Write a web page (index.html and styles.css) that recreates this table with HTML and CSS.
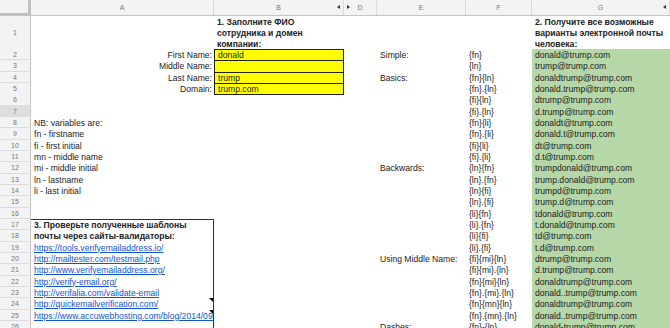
FILE: index.html
```html
<!DOCTYPE html>
<html lang="ru">
  <head>
    <meta charset="UTF-8" />
    <title>Шаблоны email</title>
    <link rel="stylesheet" href="styles.css">
  </head>
  <body>
    <div class="sheet">
      <!-- заголовки колонок -->
      <div class="row head">
        <div class="corner"></div>
        <div class="col">A</div>
        <div class="col">B<span class="arrow arrow-left at-right"></span></div>
        <div class="col"><span class="arrow arrow-right at-left"></span>D</div>
        <div class="col">E</div>
        <div class="col">F</div>
        <div class="col">G<span class="arrow arrow-left at-right"></span></div>
      </div>

      <div class="row tall">
        <div class="num">1</div>
        <div class="cell"></div>
        <div class="cell title">1. Заполните ФИО<br>сотрудника и домен<br>компании:</div>
        <div class="cell"></div>
        <div class="cell"></div>
        <div class="cell"></div>
        <div class="cell title">2. Получите все возможные<br>варианты электронной почты<br>человека:</div>
      </div>

      <div class="row">
        <div class="num">2</div>
        <div class="cell right">First Name:</div>
        <div class="cell input">donald</div>
        <div class="cell"></div>
        <div class="cell">Simple:</div>
        <div class="cell">{fn}</div>
        <div class="cell green">donald@trump.com</div>
      </div>
      <div class="row">
        <div class="num">3</div>
        <div class="cell right">Middle Name:</div>
        <div class="cell input"></div>
        <div class="cell"></div>
        <div class="cell"></div>
        <div class="cell">{ln}</div>
        <div class="cell green">trump@trump.com</div>
      </div>
      <div class="row">
        <div class="num">4</div>
        <div class="cell right">Last Name:</div>
        <div class="cell input">trump</div>
        <div class="cell"></div>
        <div class="cell">Basics:</div>
        <div class="cell">{fn}{ln}</div>
        <div class="cell green">donaldtrump@trump.com</div>
      </div>
      <div class="row">
        <div class="num">5</div>
        <div class="cell right">Domain:</div>
        <div class="cell input last">trump.com</div>
        <div class="cell"></div>
        <div class="cell"></div>
        <div class="cell">{fn}.{ln}</div>
        <div class="cell green">donald.trump@trump.com</div>
      </div>
      <div class="row">
        <div class="num">6</div>
        <div class="cell"></div>
        <div class="cell"></div>
        <div class="cell"></div>
        <div class="cell"></div>
        <div class="cell">{fi}{ln}</div>
        <div class="cell green">dtrump@trump.com</div>
      </div>
      <div class="row">
        <div class="num selected">7</div>
        <div class="cell"></div>
        <div class="cell"></div>
        <div class="cell"></div>
        <div class="cell"></div>
        <div class="cell">{fi}.{ln}</div>
        <div class="cell green">d.trump@trump.com</div>
      </div>
      <div class="row">
        <div class="num">8</div>
        <div class="cell">NB: variables are:</div>
        <div class="cell"></div>
        <div class="cell"></div>
        <div class="cell"></div>
        <div class="cell">{fn}{li}</div>
        <div class="cell green">donaldt@trump.com</div>
      </div>
      <div class="row">
        <div class="num">9</div>
        <div class="cell">fn - firstname</div>
        <div class="cell"></div>
        <div class="cell"></div>
        <div class="cell"></div>
        <div class="cell">{fn}.{li}</div>
        <div class="cell green">donald.t@trump.com</div>
      </div>
      <div class="row">
        <div class="num">10</div>
        <div class="cell">fi - first initial</div>
        <div class="cell"></div>
        <div class="cell"></div>
        <div class="cell"></div>
        <div class="cell">{fi}{li}</div>
        <div class="cell green">dt@trump.com</div>
      </div>
      <div class="row">
        <div class="num">11</div>
        <div class="cell">mn - middle name</div>
        <div class="cell"></div>
        <div class="cell"></div>
        <div class="cell"></div>
        <div class="cell">{fi}.{li}</div>
        <div class="cell green">d.t@trump.com</div>
      </div>
      <div class="row">
        <div class="num">12</div>
        <div class="cell">mi - middle initial</div>
        <div class="cell"></div>
        <div class="cell"></div>
        <div class="cell">Backwards:</div>
        <div class="cell">{ln}{fn}</div>
        <div class="cell green">trumpdonald@trump.com</div>
      </div>
      <div class="row">
        <div class="num">13</div>
        <div class="cell">ln - lastname</div>
        <div class="cell"></div>
        <div class="cell"></div>
        <div class="cell"></div>
        <div class="cell">{ln}.{fn}</div>
        <div class="cell green">trump.donald@trump.com</div>
      </div>
      <div class="row">
        <div class="num">14</div>
        <div class="cell">li - last initial</div>
        <div class="cell"></div>
        <div class="cell"></div>
        <div class="cell"></div>
        <div class="cell">{ln}{fi}</div>
        <div class="cell green">trumpd@trump.com</div>
      </div>
      <div class="row">
        <div class="num">15</div>
        <div class="cell"></div>
        <div class="cell"></div>
        <div class="cell"></div>
        <div class="cell"></div>
        <div class="cell">{ln}.{fi}</div>
        <div class="cell green">trump.d@trump.com</div>
      </div>
      <div class="row">
        <div class="num">16</div>
        <div class="cell"></div>
        <div class="cell"></div>
        <div class="cell"></div>
        <div class="cell"></div>
        <div class="cell">{li}{fn}</div>
        <div class="cell green">tdonald@trump.com</div>
      </div>
      <div class="row">
        <div class="num">17</div>
        <div class="cell box box-top bold">3. Проверьте полученные шаблоны</div>
        <div class="cell"></div>
        <div class="cell"></div>
        <div class="cell"></div>
        <div class="cell">{li}.{fn}</div>
        <div class="cell green">t.donald@trump.com</div>
      </div>
      <div class="row">
        <div class="num">18</div>
        <div class="cell box bold">почты через сайты-валидаторы:</div>
        <div class="cell"></div>
        <div class="cell"></div>
        <div class="cell"></div>
        <div class="cell">{li}{fi}</div>
        <div class="cell green">td@trump.com</div>
      </div>
      <div class="row">
        <div class="num">19</div>
        <div class="cell box"><a href="#">https://tools.verifyemailaddress.io/</a></div>
        <div class="cell"></div>
        <div class="cell"></div>
        <div class="cell"></div>
        <div class="cell">{li}.{fi}</div>
        <div class="cell green">t.d@trump.com</div>
      </div>
      <div class="row">
        <div class="num">20</div>
        <div class="cell box"><a href="#">http://mailtester.com/testmail.php</a></div>
        <div class="cell"></div>
        <div class="cell"></div>
        <div class="cell">Using Middle Name:</div>
        <div class="cell">{fi}{mi}{ln}</div>
        <div class="cell green">dtrump@trump.com</div>
      </div>
      <div class="row">
        <div class="num">21</div>
        <div class="cell box"><a href="#">http://www.verifyemailaddress.org/</a></div>
        <div class="cell"></div>
        <div class="cell"></div>
        <div class="cell"></div>
        <div class="cell">{fi}{mi}.{ln}</div>
        <div class="cell green">d.trump@trump.com</div>
      </div>
      <div class="row">
        <div class="num">22</div>
        <div class="cell box"><a href="#">http://verify-email.org/</a></div>
        <div class="cell"></div>
        <div class="cell"></div>
        <div class="cell"></div>
        <div class="cell">{fn}{mi}{ln}</div>
        <div class="cell green">donaldtrump@trump.com</div>
      </div>
      <div class="row">
        <div class="num">23</div>
        <div class="cell box"><a href="#">http://verifalia.com/validate-email</a></div>
        <div class="cell"></div>
        <div class="cell"></div>
        <div class="cell"></div>
        <div class="cell">{fn}.{mi}.{ln}</div>
        <div class="cell green">donald..trump@trump.com</div>
      </div>
      <div class="row">
        <div class="num">24</div>
        <div class="cell box note"><a href="#">http://quickemailverification.com/</a></div>
        <div class="cell"></div>
        <div class="cell"></div>
        <div class="cell"></div>
        <div class="cell">{fn}{mn}{ln}</div>
        <div class="cell green">donaldtrump@trump.com</div>
      </div>
      <div class="row">
        <div class="num">25</div>
        <div class="cell box note"><a href="#">https://www.accuwebhosting.com/blog/2014/09/</a></div>
        <div class="cell"></div>
        <div class="cell"></div>
        <div class="cell"></div>
        <div class="cell">{fn}.{mn}.{ln}</div>
        <div class="cell green">donald..trump@trump.com</div>
      </div>
      <div class="row">
        <div class="num">26</div>
        <div class="cell box"></div>
        <div class="cell"></div>
        <div class="cell"></div>
        <div class="cell">Dashes:</div>
        <div class="cell">{fn}-{ln}</div>
        <div class="cell green">donald-trump@trump.com</div>
      </div>
    </div>
  </body>
</html>
```

FILE: styles.css
```css
/* базовые стили */
* {
  margin: 0;
  padding: 0;
  box-sizing: border-box;
}

body {
  width: 670px;
  height: 328px;
  overflow: hidden;
  background-color: #fff;
  color: #222;
  font-family: "Liberation Sans", Arial, sans-serif;
  font-size: 8.6px;
}

.sheet {
  width: 670px;
}

/* строки таблицы: 11, 11, 12 px ~ 11.37 в среднем */
.row {
  display: grid;
  grid-template-columns: 31px 183px 130px 33px 89px 66px 138px;
  height: 11px;
}

.row:nth-child(3n + 1) {
  height: 12px;
}

.row.tall {
  height: 33px;
}

.row.head {
  height: 16px;
  background-color: #f3f3f3;
  border-bottom: 1px solid #c4c4c4;
}

.corner {
  border-right: 3px solid #c0c0c0;
  border-bottom: 2px solid #c0c0c0;
}

.col {
  position: relative;
  text-align: center;
  font-size: 7px;
  line-height: 15px;
  color: #777;
  border-right: 1px solid #dadada;
}

.arrow {
  position: absolute;
  top: 5px;
  width: 0;
  height: 0;
  border-top: 2.5px solid transparent;
  border-bottom: 2.5px solid transparent;
}

.arrow-left {
  border-right: 3px solid #333;
}

.arrow-right {
  border-left: 3px solid #333;
}

.at-right {
  right: 3px;
}

.at-left {
  left: 3px;
}

/* номера строк */
.num {
  display: flex;
  align-items: center;
  justify-content: center;
  background-color: #f3f3f3;
  border-right: 1px solid #c4c4c4;
  border-bottom: 1px solid #dcdcdc;
  color: #777;
  font-size: 7px;
}

.num.selected {
  background-color: #dedede;
}

/* ячейки */
.cell {
  position: relative;
  display: flex;
  align-items: center;
  padding: 0 2px 0 3px;
  white-space: nowrap;
  line-height: 10px;
}

.cell.right {
  justify-content: flex-end;
}

.cell.title {
  display: block;
  padding-top: 1px;
  font-weight: bold;
  line-height: 11px;
}

.bold {
  font-weight: bold;
}

.input {
  background-color: #ffff00;
  border-top: 1px solid #222;
  border-left: 1px solid #222;
  border-right: 1px solid #222;
}

.input.last {
  border-bottom: 1px solid #222;
}

.green {
  background-color: #b6d7a8;
}

/* блок со ссылками */
.box {
  overflow: hidden;
  border-right: 1px solid #333;
}

.box-top {
  border-top: 1px solid #333;
}

.box a {
  color: #1155cc;
  text-decoration: underline;
}

.note::after {
  content: "";
  position: absolute;
  top: 0;
  right: 0;
  border-left: 4px solid transparent;
  border-top: 4px solid #000;
}
```
